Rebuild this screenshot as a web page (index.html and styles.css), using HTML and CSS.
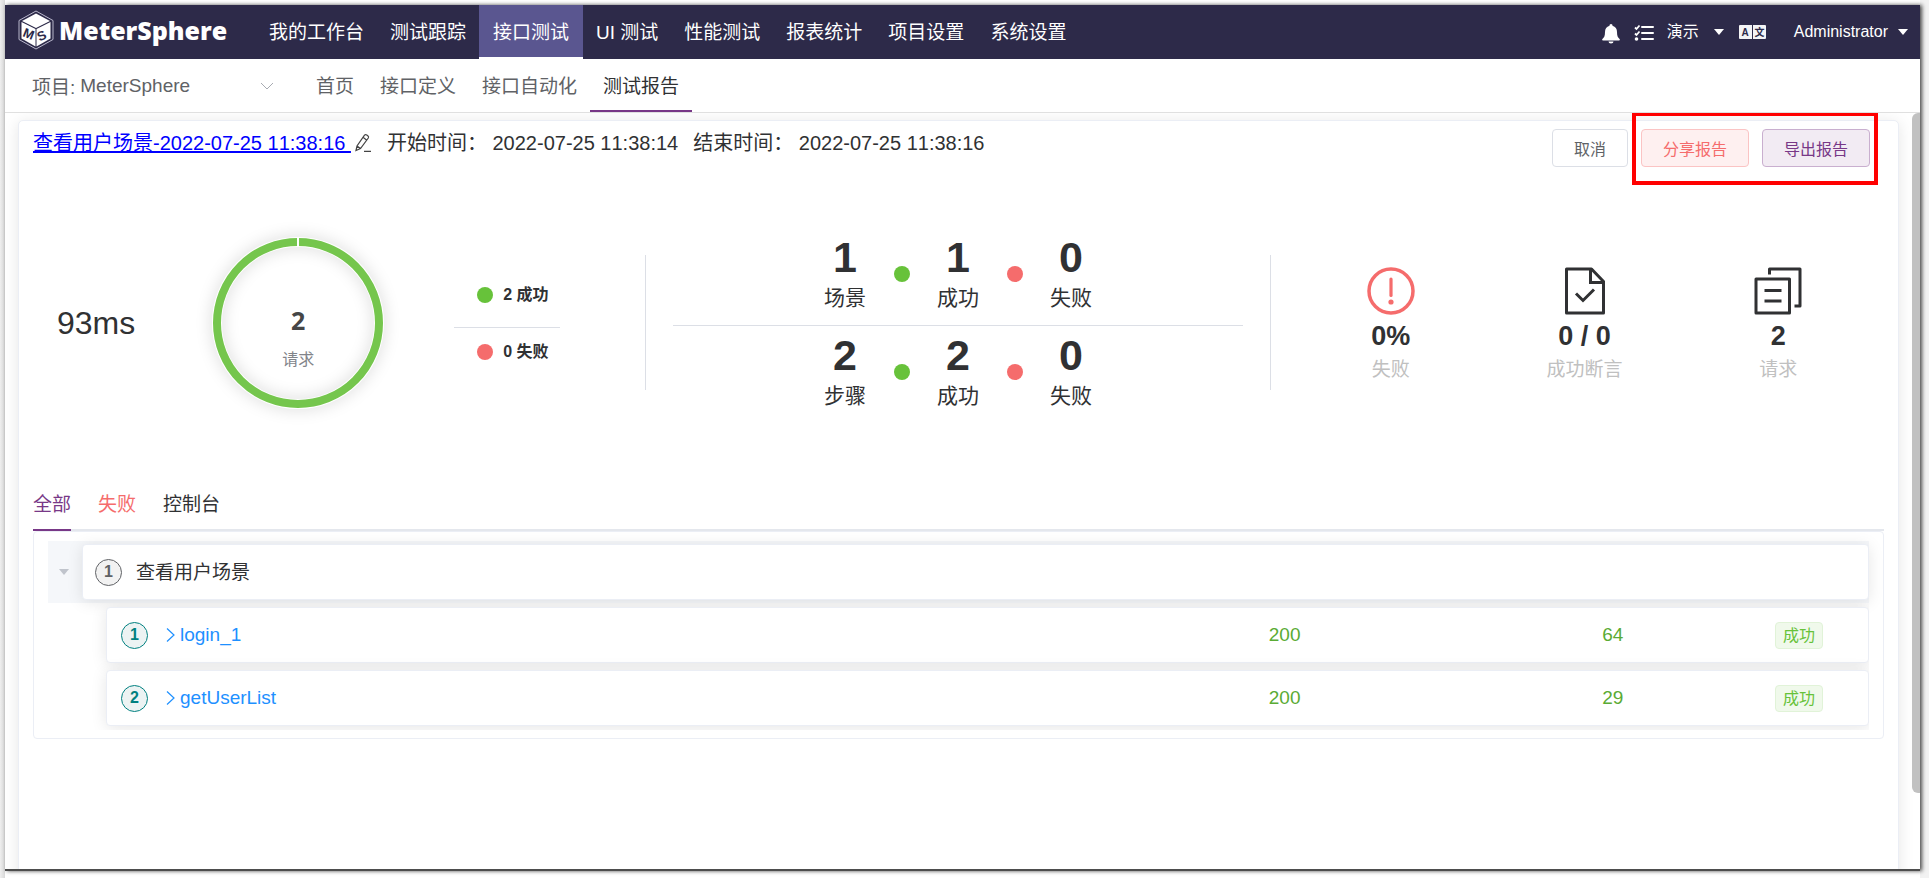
FILE: index.html
```html
<!DOCTYPE html>
<html lang="zh-CN">
<head>
<meta charset="utf-8">
<title>MeterSphere</title>
<link rel="stylesheet" href="styles.css">
</head>
<body>
<div class="window">
  <header class="topbar">
    <a class="brand" href="#">
      <svg class="brand-mark" viewBox="0 0 36 40" width="36" height="40" aria-hidden="true">
        <path d="M18 1 35 10.500V29.500L18 39 1 29.500V10.500Z" fill="none" stroke="#b9b7cc" stroke-width="1"/>
        <path d="M18 3.500 32 11 18 18 4 11Z" fill="#fff"/>
        <path d="M3.500 12 17.500 19V36.500L3.500 28.500Z" fill="#fff"/>
        <path d="M32.500 12 18.500 19V36.500L32.500 28.500Z" fill="#fff"/>
        <text class="mark-letter" transform="translate(4 26) rotate(22)">M</text>
        <text class="mark-letter" transform="translate(21.500 31.500) rotate(-24)">S</text>
      </svg>
      <span class="brand-name">MeterSphere</span>
    </a>
    <nav class="menu">
      <a href="#">我的工作台</a>
      <a href="#">测试跟踪</a>
      <a class="active" href="#">接口测试</a>
      <a href="#">UI 测试</a>
      <a href="#">性能测试</a>
      <a href="#">报表统计</a>
      <a href="#">项目设置</a>
      <a href="#">系统设置</a>
    </nav>
    <div class="tools">
      <button class="tool" aria-label="通知">
        <svg viewBox="0 0 18 20" width="18" height="20"><path d="M9 0c1 0 1.500.7 1.500 1.800C13.500 2.600 15 5 15 8c0 4 .8 5.500 2.600 7 .5.600.2 1.500-.6 1.500H1c-.8 0-1.100-.9-.6-1.500C2.200 13.500 3 12 3 8c0-3 1.500-5.400 4.500-6.200C7.500.7 8 0 9 0ZM6.500 17.500h5a2.500 2 0 0 1-5 0Z" fill="#fff"/></svg>
      </button>
      <button class="tool tasks" aria-label="任务">
        <svg viewBox="0 0 20 18" width="20" height="18"><path d="M8 3h11M8 9h11M8 15h11" stroke="#fff" stroke-width="2" stroke-linecap="round"/><path d="M1 3.500 2.500 5 5.500 1.500M1 9.500 2.500 11 5.500 7.500" fill="none" stroke="#fff" stroke-width="1.800"/><circle cx="2.500" cy="15" r="1.800" fill="#fff"/></svg>
      </button>
      <button class="tool workspace">演示<span class="caret"></span></button>
      <button class="tool lang" aria-label="语言">
        <svg viewBox="0 0 28 14" width="28" height="14"><path d="M1 0h12v14H1q-1 0-1-1V1q0-1 1-1ZM14 0h12q1 0 1 1v12q0 1-1 1H14Z" fill="#f4f4f6"/><text class="lang-letter" x="2.500" y="11">A</text><text class="lang-letter" x="15.500" y="11">文</text></svg>
      </button>
      <button class="tool user">Administrator<span class="caret"></span></button>
    </div>
  </header>

  <div class="subbar">
    <div class="project">
      <label for="project">项目:</label>
      <select id="project"><option>MeterSphere</option></select>
      <svg class="chevron" viewBox="0 0 14 8" width="14" height="8" aria-hidden="true"><path d="M1 1l6 6 6-6" fill="none" stroke="#a8abb2"/></svg>
    </div>
    <nav class="subnav">
      <a href="#">首页</a>
      <a href="#">接口定义</a>
      <a href="#">接口自动化</a>
      <a class="active" href="#">测试报告</a>
    </nav>
  </div>

  <div class="viewport">
    <main class="card">
      <div class="report-head">
        <div class="report-title">
          <a href="#">查看用户场景-2022-07-25 11:38:16&nbsp;</a>
          <svg class="edit" viewBox="0 0 18 20" width="18" height="20" aria-hidden="true"><path d="M2 17.500 3 13 10.500 2.200Q11.500 1.200 12.800 2.100L14 3Q15 3.900 14.300 5L6.500 15.500 2 17.500ZM9 4.300 12.500 7M3 13l3.500 2.500M10 18.300h7" fill="none" stroke="#444" stroke-width="1.200"/></svg>
          <span>开始时间： 2022-07-25 11:38:14</span>
          <span>结束时间： 2022-07-25 11:38:16</span>
        </div>
        <div class="actions">
          <button class="btn">取消</button>
          <div class="highlight">
            <button class="btn danger">分享报告</button>
            <button class="btn primary">导出报告</button>
          </div>
        </div>
      </div>

      <section class="metrics">
        <div class="overview">
          <span class="duration">93ms</span>
          <div class="donut">
            <svg viewBox="0 0 180 180" width="180" height="180" aria-hidden="true">
              <circle class="ring-edge" cx="90" cy="90" r="81"/>
              <circle class="ring" cx="90" cy="90" r="81"/>
              <path d="M90 4v10" stroke="#fff" stroke-width="2"/>
            </svg>
            <div class="donut-text"><strong>2</strong><span>请求</span></div>
          </div>
          <div class="legend">
            <div class="legend-item"><i class="dot ok"></i>2 成功</div>
            <div class="legend-item"><i class="dot bad"></i>0 失败</div>
          </div>
        </div>
        <div class="counts">
          <div class="count-row">
            <div class="count"><b>1</b><span>场景</span></div>
            <i class="dot ok"></i>
            <div class="count"><b>1</b><span>成功</span></div>
            <i class="dot bad"></i>
            <div class="count"><b>0</b><span>失败</span></div>
          </div>
          <div class="count-row">
            <div class="count"><b>2</b><span>步骤</span></div>
            <i class="dot ok"></i>
            <div class="count"><b>2</b><span>成功</span></div>
            <i class="dot bad"></i>
            <div class="count"><b>0</b><span>失败</span></div>
          </div>
        </div>
        <div class="totals">
          <div class="total">
            <svg viewBox="0 0 48 48" width="48" height="48" aria-hidden="true"><g fill="none" stroke="#f56c6c" stroke-linecap="round"><circle cx="24" cy="24" r="22" stroke-width="3.500"/><path d="M24 12v16.500" stroke-width="3.200"/></g><circle cx="24" cy="35" r="2.600" fill="#f56c6c"/></svg>
            <b>0%</b><span>失败</span>
          </div>
          <div class="total">
            <svg viewBox="0 0 48 48" width="48" height="48" aria-hidden="true"><g fill="none" stroke="#303133" stroke-width="3"><path d="M5.500 2H30.500L42.500 14.500V46H5.500Z" stroke-linejoin="round"/><path d="M29.500 2V15.500H42.500"/><path d="M15 26.500l7 7L33 22.500"/></g></svg>
            <b>0 / 0</b><span>成功断言</span>
          </div>
          <div class="total">
            <svg viewBox="0 0 48 48" width="48" height="48" aria-hidden="true"><g fill="none" stroke="#303133" stroke-width="3"><path d="M2 12H35.500V46H2Z" stroke-linejoin="round"/><path d="M15.500 7.500V2H46V39H40.500" stroke-linejoin="round"/><path d="M10.500 23.500h17M10.500 34h17"/></g></svg>
            <b>2</b><span>请求</span>
          </div>
        </div>
      </section>

      <nav class="tabs">
        <a class="active" href="#">全部</a>
        <a class="failed" href="#">失败</a>
        <a href="#">控制台</a>
      </nav>

      <section class="tree">
        <div class="scenario">
          <span class="caret"></span>
          <div class="panel">
            <span class="index">1</span>
            <span class="scenario-name">查看用户场景</span>
          </div>
        </div>
        <div class="steps">
          <div class="panel step">
            <span class="index">1</span>
            <a class="name" href="#"><svg viewBox="0 0 10 16" width="10" height="16" aria-hidden="true"><path d="M1 1.500 8 8 1 14.500" fill="none" stroke="#1e90ff" stroke-width="1.200"/></svg>login_1</a>
            <span class="value">200</span>
            <span class="value">64</span>
            <span class="tag">成功</span>
          </div>
          <div class="panel step">
            <span class="index">2</span>
            <a class="name" href="#"><svg viewBox="0 0 10 16" width="10" height="16" aria-hidden="true"><path d="M1 1.500 8 8 1 14.500" fill="none" stroke="#1e90ff" stroke-width="1.200"/></svg>getUserList</a>
            <span class="value">200</span>
            <span class="value">29</span>
            <span class="tag">成功</span>
          </div>
        </div>
      </section>
    </main>
    <div class="scrollbar"><div class="thumb"></div></div>
  </div>
</div>
</body>
</html>
```

FILE: styles.css
```css
* { box-sizing: border-box; }

body {
  margin: 0;
  height: 100vh;
  padding: 5px 9px 7px 5px;
  background: linear-gradient(90deg, #efefef 0, #d8d8d8 5px, #fff 5px, #fff calc(100% - 9px), #f2f2f2 calc(100% - 9px));
  font-family: "Liberation Sans", "Noto Sans CJK SC", sans-serif;
  font-size: 19px;
  font-kerning: none;
  color: #303133;
}

a { color: inherit; text-decoration: none; }

button, select { font-family: inherit; color: inherit; }

.window {
  display: flex;
  flex-direction: column;
  height: 100%;
  background: #fff;
  border-bottom: 2px solid #4d4d4d;
  box-shadow: 2px 0 4px rgba(0, 0, 0, .7), 0 -4px 0 #fff, 0 8px 0 #fff;
}

/* Top bar */
.topbar {
  display: flex;
  flex: none;
  height: 54px;
  background: #2d2a49;
  color: #fff;
}

.brand {
  display: flex;
  align-items: center;
  gap: 5px;
  width: 251px;
  padding: 0 0 4px 13px;
}

.brand-name {
  font-family: "Noto Sans", "Open Sans", sans-serif;
  font-weight: 900;
  font-size: 25px;
  line-height: 40px;
}

.mark-letter {
  font-family: "Liberation Sans", sans-serif;
  font-weight: 700;
  font-size: 13px;
  fill: #2d2a49;
}

.menu, .subnav { display: flex; }

.menu a {
  height: 52px;
  padding: 0 13px;
  line-height: 55px;
}

.menu .active {
  padding: 0 14px;
  background: #5a5690;
  box-shadow: 0 2px 0 #fff;
}

.tools {
  display: flex;
  align-items: center;
  margin-left: auto;
  padding: 0 12px 0 0;
}

.tool {
  display: flex;
  align-items: center;
  padding: 0;
  border: 0;
  background: none;
  font-size: 16px;
  line-height: 24px;
}

.tool.tasks { margin: 2px 0 0 14px; }
.tool.workspace { margin-left: 13px; gap: 15px; }
.tool.lang { margin-left: 15px; }
.tool.user { margin-left: 27px; gap: 10px; }
.tool:first-child { padding-top: 4px; }

.lang-letter {
  font-family: "Liberation Sans", "Noto Sans CJK SC", sans-serif;
  font-weight: 700;
  font-size: 10px;
  fill: #2d2a49;
}

.caret {
  border: 5px solid transparent;
  border-top: 6px solid currentColor;
  border-bottom: 0;
}

/* Project selector and sub navigation */
.subbar {
  display: flex;
  flex: none;
  height: 54px;
  border-bottom: 1px solid #e0e0e0;
  color: #606266;
}

.project {
  display: flex;
  align-items: center;
  gap: 5px;
  width: 298px;
  padding: 0 29px 0 27px;
}

.project select {
  flex: 1;
  padding: 0;
  border: 0;
  background: none;
  appearance: none;
  font-size: 19px;
}

.subnav a {
  height: 53px;
  padding: 0 13px;
  line-height: 56px;
}

.subnav .active {
  border-bottom: 2px solid #783887;
  color: #303133;
}

/* Scrolling area */
.viewport {
  display: flex;
  flex: 1;
  min-height: 0;
  overflow: hidden;
}

.card {
  flex: 1;
  min-height: 900px;
  margin: 7px 13px 0;
  padding: 8px 14px;
  border: 1px solid #ebeef5;
  border-radius: 5px;
  background: #fff;
  box-shadow: 0 2px 16px rgba(0, 0, 0, .1);
}

.scrollbar { width: 8px; }

.thumb {
  height: 90%;
  border-radius: 6px 0 0 6px;
  background: #c1c1c1;
}

.report-head {
  display: flex;
  justify-content: space-between;
  align-items: flex-start;
}

.report-title {
  display: flex;
  align-items: center;
  gap: 15px;
  font-size: 20px;
  line-height: 28px;
}

.report-title a { color: #00f; text-decoration: underline; }
.report-title .edit { margin-left: -12px; }

.actions {
  display: flex;
  gap: 13px;
  padding-right: 14px;
}

.btn {
  height: 38px;
  padding: 0 21px;
  border: 1px solid #dcdfe6;
  border-radius: 4px;
  background: #fff;
  color: #606266;
  font-size: 16px;
}

.btn.danger { border-color: #fbc4c4; background: #fef0f0; color: #f56c6c; }
.btn.primary { border-color: #c9afcf; background: #f2ebf3; color: #783887; }

.highlight {
  position: relative;
  display: flex;
  gap: 13px;
}

.highlight::after {
  content: "";
  position: absolute;
  inset: -17px -8px -18px -9px;
  border: 4px solid #f00;
  pointer-events: none;
}

/* Metrics */
.metrics {
  display: grid;
  grid-template-columns: 612fr 625fr 614fr;
  align-items: center;
  margin-top: 66px;
}

.overview, .donut, .count-row, .totals { display: flex; align-items: center; }

.overview { padding-left: 24px; }

.duration { font-size: 32px; line-height: 40px; }

.donut {
  position: relative;
  justify-content: center;
  margin: 0 66px 0 73px;
}

.donut svg { display: block; overflow: visible; }

.ring-edge {
  fill: none;
  stroke: #fff;
  stroke-width: 10px;
  filter: drop-shadow(0 0 8px rgba(0, 0, 0, .16));
}

.ring { fill: none; stroke: #75c64d; stroke-width: 8px; }

.donut-text {
  position: absolute;
  display: flex;
  flex-direction: column;
  align-items: center;
  padding-top: 34px;
  font-size: 16px;
  line-height: 40px;
  color: #82848a;
}

.donut-text strong {
  font-family: "Noto Sans", sans-serif;
  font-size: 25px;
  color: #464646;
}

.dot { flex: none; width: 16px; height: 16px; border-radius: 50%; }
.dot.ok { background: #67c23a; }
.dot.bad { background: #f56c6c; }

.legend { width: 106px; font-size: 16px; font-weight: 700; }

.legend-item {
  display: flex;
  align-items: center;
  gap: 10px;
  padding-left: 23px;
  line-height: 48px;
}

.legend-item:first-child {
  padding-bottom: 8px;
  border-bottom: 1px solid #dcdfe6;
}

.counts { position: relative; padding: 0 27px 0 28px; }

.counts::before, .totals::before {
  content: "";
  position: absolute;
  top: calc(50% - 68px);
  left: 0;
  height: 135px;
  border-left: 1px solid #dcdfe6;
}

.count-row { justify-content: center; gap: 27px; }

.count-row:first-child {
  margin-bottom: 5px;
  padding-bottom: 10px;
  border-bottom: 1px solid #dcdfe6;
}

.count, .total {
  display: flex;
  flex-direction: column;
  align-items: center;
}

.count { width: 43px; font-size: 21px; line-height: 34px; }
.count b { font-size: 43px; line-height: 48px; }

.totals { position: relative; padding: 4px 9px 0 24px; }

.total { flex: 1; line-height: 26px; }
.total b { font-size: 27px; line-height: 42px; }
.total span { color: #c0c0c0; }

/* Result tabs */
.tabs {
  display: flex;
  gap: 27px;
  margin-top: 68px;
  box-shadow: inset 0 -2px 0 #e4e7ed;
}

.tabs a {
  border-bottom: 2px solid transparent;
  line-height: 48px;
}

.tabs .active { border-color: #783887; color: #783887; }
.tabs .failed { color: #f56c6c; }

/* Result tree */
.tree {
  padding: 9px 14px 8px;
  border: 1px solid #ebeef5;
  border-radius: 4px;
}

.scenario {
  display: flex;
  align-items: center;
  gap: 13px;
  padding: 3px 0 3px 11px;
  background: #f5f7fa;
  color: #303133;
}

.scenario .caret { color: #c0c4cc; }

.scenario-name { padding-bottom: 4px; }

.panel {
  display: flex;
  flex: 1;
  align-items: center;
  gap: 14px;
  height: 56px;
  padding-left: 12px;
  border: 1px solid #ebeef5;
  border-radius: 4px;
  background: #fff;
  box-shadow: 0 2px 16px rgba(0, 0, 0, .1);
}

.steps {
  display: grid;
  gap: 7px;
  overflow: hidden;
  padding: 4px 0 4px 58px;
}

.index {
  display: grid;
  place-items: center;
  width: 27px;
  height: 27px;
  border: 1px solid #606266;
  border-radius: 50%;
  background: #f2f2f2;
  color: #606266;
  font-size: 16px;
  font-weight: 700;
}

.step {
  display: grid;
  grid-template-columns: 27px 1096fr 326fr 169fr 91fr;
  gap: 0;
  padding-left: 14px;
}

.step .index { border-color: #008080; background: #ecf3f3; color: #008080; }

.name {
  display: flex;
  align-items: center;
  gap: 4px;
  padding-left: 18px;
  color: #1e90ff;
}

.value { color: #5aab34; }

.tag {
  justify-self: start;
  padding: 0 7px;
  border: 1px solid #e1f3d8;
  border-radius: 4px;
  background: #f0f9eb;
  color: #67c23a;
  font-size: 16px;
  line-height: 25px;
}
```
